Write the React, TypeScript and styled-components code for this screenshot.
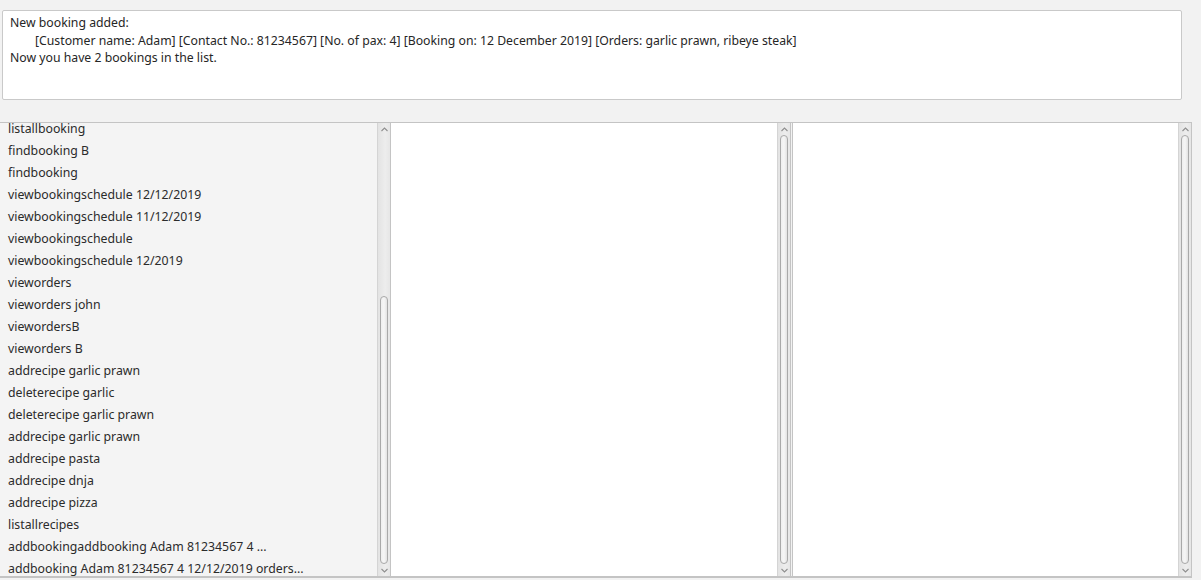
import React from "react";
import styled, { createGlobalStyle } from "styled-components";

const Global = createGlobalStyle`
  html, body { margin: 0; padding: 0; background: #f2f2f2; }
  body { font-family: "Noto Sans", "Open Sans", sans-serif; }
  * { box-sizing: border-box; }
`;

const Page = styled.div`
  width: 1201px;
  height: 580px;
  overflow: hidden;
  background: #f2f2f2;
  padding-top: 10px;
  display: flex;
  flex-direction: column;
`;

const ResultBox = styled.div`
  margin: 0 19px 0 2px;
  height: 90px;
  background: #ffffff;
  border: 1px solid #c9c9c9;
  border-radius: 2px;
  padding: 3px 7px;
  font-size: 12.25px;
  line-height: 17.5px;
  color: #262626;
  white-space: pre;
`;

const Indent = styled.div`
  padding-left: 25px;
`;

const SplitArea = styled.div`
  margin-top: 22px;
  margin-right: 9px;
  height: 456px;
  display: flex;
  border-top: 1px solid #c4c4c4;
  border-bottom: 2px solid #c4c4c4;
`;

const Pane = styled.div<{ $w?: number; $bg: string; $bl?: boolean }>`
  ${(p) => (p.$w ? `width: ${p.$w}px; flex: none;` : "flex: 1;")}
  background: ${(p) => p.$bg};
  display: flex;
  border-left: ${(p) => (p.$bl ? "1px solid #c4c4c4" : "none")};
  border-right: 1px solid #c4c4c4;
  overflow: hidden;
`;

const Divider = styled.div`
  width: 1px;
  flex: none;
  background: #f2f2f2;
`;

const ListBody = styled.div`
  flex: 1;
  overflow: hidden;
  padding-left: 8px;
  font-size: 12.3px;
  color: #2b2b2b;
`;

const ListInner = styled.div`
  margin-top: -5px;
`;

const Row = styled.div`
  height: 22px;
  line-height: 22px;
  white-space: nowrap;
`;

const Blank = styled.div`
  flex: 1;
`;

const Track = styled.div`
  width: 13px;
  flex: none;
  display: flex;
  flex-direction: column;
  align-items: center;
  background: linear-gradient(to right, #e3e3e3, #ededed 60%, #e6e6e6);
  border-left: 1px solid #d4d4d4;
`;

const Arrow = styled.div`
  height: 12px;
  width: 100%;
  display: flex;
  align-items: center;
  justify-content: center;
  flex: none;
`;

const ThumbArea = styled.div<{ $gap: number }>`
  flex: 1;
  width: 100%;
  padding: ${(p) => p.$gap}px 2px 0 2px;
  display: flex;
`;

const Thumb = styled.div`
  flex: 1;
  border: 1px solid #a9a9a9;
  border-radius: 5px;
  background: linear-gradient(to right, #eeeeee, #f6f6f6 50%, #e2e2e2);
`;

const Chevron = ({ up }: { up?: boolean }) => (
  <svg width="7" height="5" viewBox="0 0 7 5">
    <path
      d={up ? "M0.5 4 L3.5 1 L6.5 4" : "M0.5 1 L3.5 4 L6.5 1"}
      fill="none"
      stroke="#8f8f8f"
      strokeWidth="1.1"
    />
  </svg>
);

const ScrollBar = ({ gap }: { gap: number }) => (
  <Track>
    <Arrow>
      <Chevron up />
    </Arrow>
    <ThumbArea $gap={gap}>
      <Thumb />
    </ThumbArea>
    <Arrow>
      <Chevron />
    </Arrow>
  </Track>
);

const history = [
  "listallbooking",
  "findbooking B",
  "findbooking",
  "viewbookingschedule 12/12/2019",
  "viewbookingschedule 11/12/2019",
  "viewbookingschedule",
  "viewbookingschedule 12/2019",
  "vieworders",
  "vieworders john",
  "viewordersB",
  "vieworders B",
  "addrecipe garlic prawn",
  "deleterecipe garlic",
  "deleterecipe garlic prawn",
  "addrecipe garlic prawn",
  "addrecipe pasta",
  "addrecipe dnja",
  "addrecipe pizza",
  "listallrecipes",
  "addbookingaddbooking Adam 81234567 4 ...",
  "addbooking Adam 81234567 4 12/12/2019 orders...",
];

export default function App() {
  return (
    <>
      <Global />
      <Page>
        <ResultBox>
          <div>New booking added:</div>
          <Indent>
            [Customer name: Adam] [Contact No.: 81234567] [No. of pax: 4] [Booking on: 12 December 2019] [Orders: garlic prawn, ribeye steak]
          </Indent>
          <div>Now you have 2 bookings in the list.</div>
        </ResultBox>
        <SplitArea>
          <Pane $w={391} $bg="#f4f4f4">
            <ListBody>
              <ListInner>
                {history.map((h, i) => (
                  <Row key={i}>{h}</Row>
                ))}
              </ListInner>
            </ListBody>
            <ScrollBar gap={161} />
          </Pane>
          <Pane $w={400} $bg="#ffffff">
            <Blank />
            <ScrollBar gap={0} />
          </Pane>
          <Divider />
          <Pane $bg="#ffffff" $bl>
            <Blank />
            <ScrollBar gap={0} />
          </Pane>
        </SplitArea>
      </Page>
    </>
  );
}
